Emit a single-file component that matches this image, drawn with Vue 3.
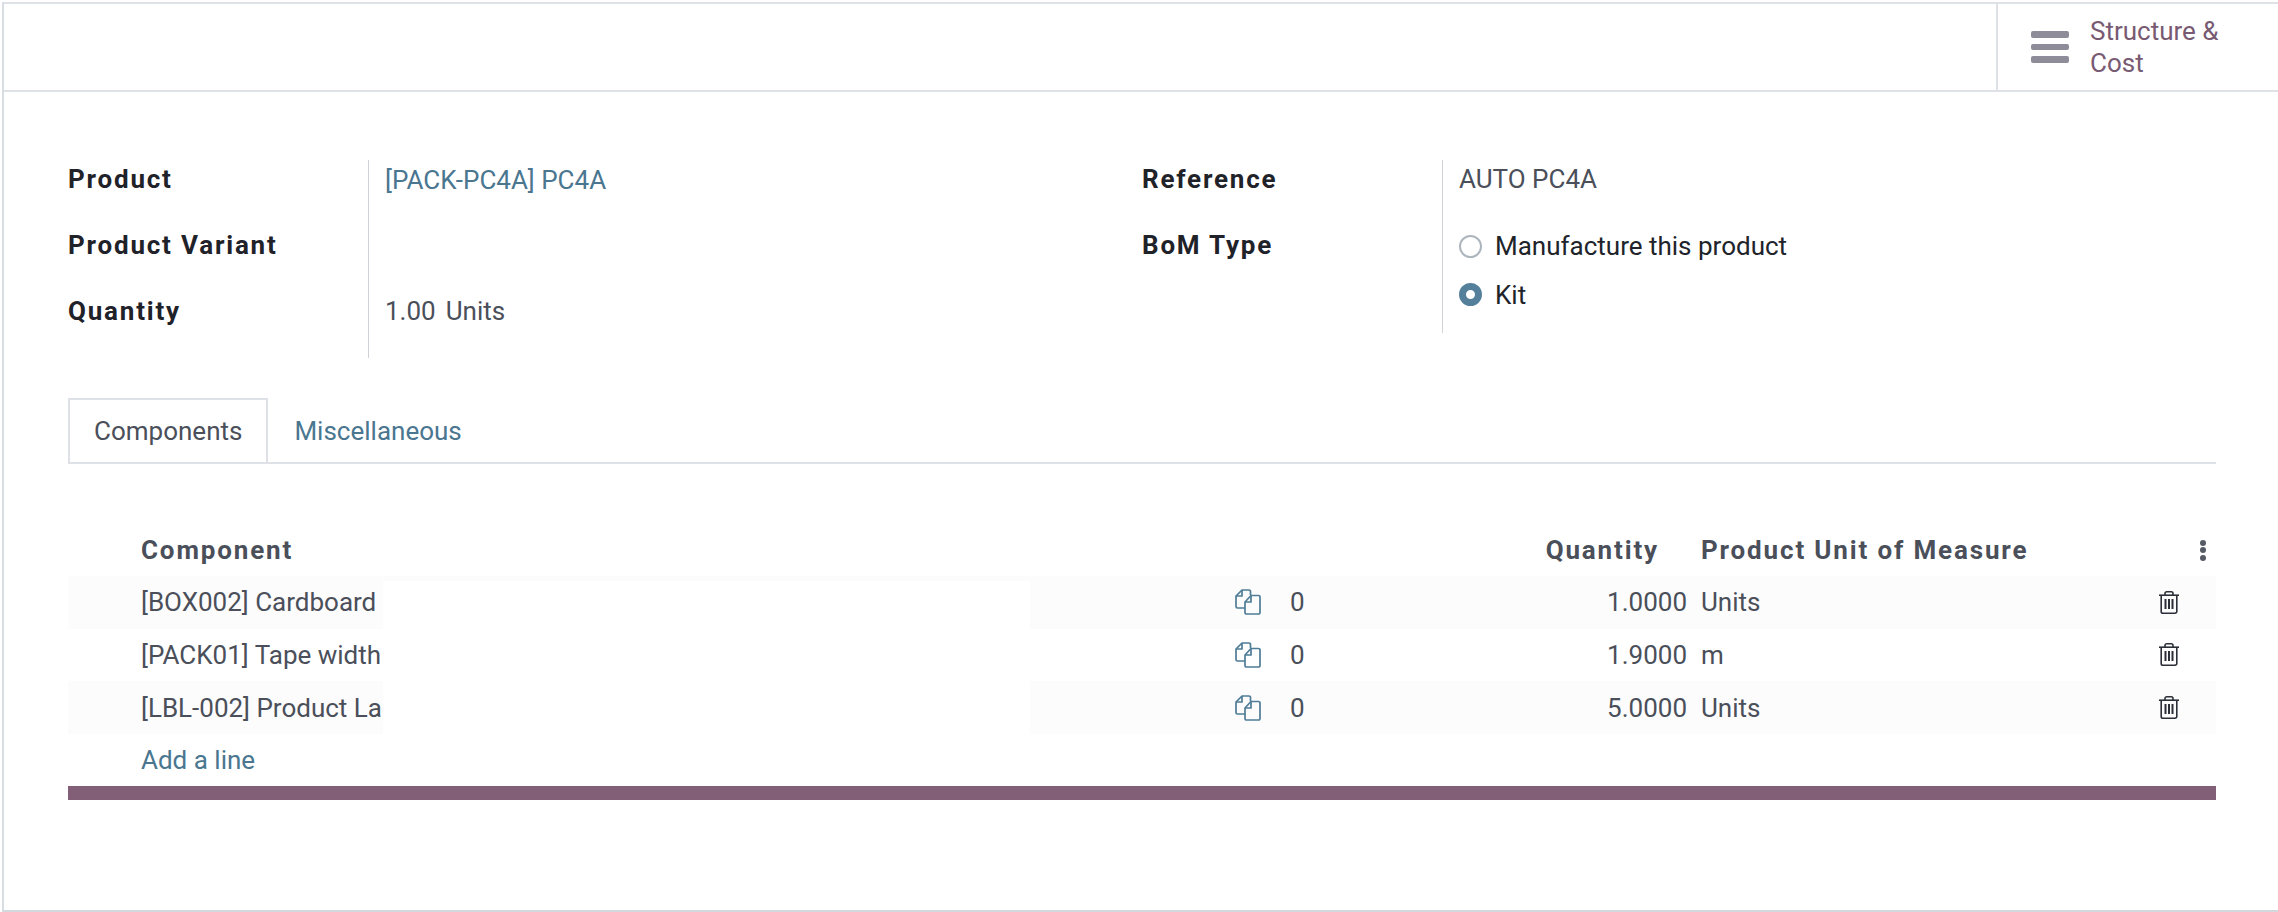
<script setup>
const rows = [
  { name: '[BOX002] Cardboard', qty: '1.0000', uom: 'Units' },
  { name: '[PACK01] Tape width', qty: '1.9000', uom: 'm' },
  { name: '[LBL-002] Product La', qty: '5.0000', uom: 'Units' },
]
</script>

<template>
  <div class="frame">
    <header class="topbar">
      <div class="stat">
        <div class="bars"><i></i><i></i><i></i></div>
        <div class="stat-text">Structure &amp;<br />Cost</div>
      </div>
    </header>

    <section class="sheet">
      <div class="groups">
        <div class="group">
          <div class="labels">
            <div class="label">Product</div>
            <div class="label">Product Variant</div>
            <div class="label">Quantity</div>
          </div>
          <div class="values v1">
            <div class="value link">[PACK-PC4A] PC4A</div>
            <div class="value"></div>
            <div class="value qty-val"><span>1.00</span><span>Units</span></div>
          </div>
        </div>
        <div class="group">
          <div class="labels">
            <div class="label">Reference</div>
            <div class="label">BoM Type</div>
          </div>
          <div class="values v2">
            <div class="value">AUTO PC4A</div>
            <div class="radio first"><span class="dot"></span>Manufacture this product</div>
            <div class="radio"><span class="dot on"></span>Kit</div>
          </div>
        </div>
      </div>

      <nav class="tabs">
        <div class="tab active">Components</div>
        <div class="tab">Miscellaneous</div>
      </nav>

      <div class="table">
        <div class="row head">
          <div class="c-name">Component</div>
          <div class="c-fc"></div>
          <div class="c-qty">Quantity</div>
          <div class="c-uom">Product Unit of Measure</div>
          <div class="c-act kebab"><i></i><i></i><i></i></div>
        </div>
        <div v-for="(r, i) in rows" :key="r.name" class="row body" :class="{ odd: i % 2 === 0, top: i === 0 }">
          <div class="c-name"><span class="clip">{{ r.name }}</span></div>
          <div class="c-fc">
            <svg class="copy" width="26" height="26" viewBox="0 0 26 26" fill="none" stroke="#4f7c96" stroke-width="1.7" stroke-linejoin="round">
              <path d="M15.5 6V2.5A1.5 1.5 0 0 0 14 1H7L1 7v10.5A1.5 1.5 0 0 0 2.5 19H10" />
              <path d="M7 1v6H1" />
              <path d="M16 6.5h7.5A1.5 1.5 0 0 1 25 8v15.5a1.5 1.5 0 0 1-1.5 1.5h-12a1.5 1.5 0 0 1-1.5-1.5V13z" />
              <path d="M16 6.5V13h-6" />
            </svg>
            <span class="zero">0</span>
          </div>
          <div class="c-qty">{{ r.qty }}</div>
          <div class="c-uom">{{ r.uom }}</div>
          <div class="c-act">
            <svg class="trash" width="20" height="23" viewBox="0 0 20 23" fill="none" stroke="#2b2f38" stroke-width="1.6" stroke-linejoin="round">
              <path d="M0 4.2h20" />
              <path d="M6 4V2.5A1.7 1.7 0 0 1 7.7.8h4.6A1.7 1.7 0 0 1 14 2.5V4" />
              <path d="M2.2 4.2v16.2a1.8 1.8 0 0 0 1.8 1.8h12a1.8 1.8 0 0 0 1.8-1.8V4.2" />
              <path d="M6.5 8v10M10 8v10M13.5 8v10" stroke-width="2" />
            </svg>
          </div>
        </div>
        <div class="row add"><div class="c-name">Add a line</div></div>
        <div class="rule"></div>
      </div>
    </section>
  </div>
</template>

<style>
html, body { margin: 0; background: #fff; }
</style>

<style scoped>
.frame {
  box-sizing: border-box;
  width: 2276px;
  height: 910px;
  margin: 2px 0 0 2px;
  border-top: 2px solid #dee2e6;
  border-left: 2px solid #d8dde2;
  border-bottom: 2px solid #d3d8dc;
  font-family: Roboto, "Liberation Sans", sans-serif;
  font-size: 26px;
  color: #4a4f5a;
  background: #fff;
}
.topbar {
  box-sizing: border-box;
  display: flex;
  justify-content: flex-end;
  height: 88px;
  border-bottom: 2px solid #dee2e6;
}
.stat {
  box-sizing: border-box;
  width: 282px;
  display: flex;
  align-items: center;
  gap: 21px;
  padding-left: 33px;
  border-left: 2px solid #dee2e6;
  color: #785a72;
  line-height: 32px;
}
.bars { display: flex; flex-direction: column; gap: 6px; }
.bars i { display: block; width: 38px; height: 6.7px; border-radius: 2px; background: #8f8c9a; }
.sheet { padding: 68px 62px 0 64px; }
.groups { display: flex; }
.group { display: flex; width: 1074px; }
.labels { width: 300px; flex: none; }
.label {
  height: 66px;
  line-height: 38px;
  font-weight: 700;
  letter-spacing: 1.8px;
  color: #1f2229;
}
.values {
  border-left: 1px solid #cfd2d6;
  padding-left: 16px;
  flex: 1;
}
.v1 { height: 198px; }
.v2 { height: 173px; }
.value { height: 66px; line-height: 38px; }
.link { color: #4a7690; line-height: 41px; }
.qty-val { display: flex; gap: 10px; }
.radio {
  display: flex;
  align-items: center;
  gap: 13px;
  height: 48.5px;
  color: #20232a;
}
.radio.first { margin-top: -4px; }
.dot {
  box-sizing: border-box;
  width: 23px;
  height: 23px;
  border-radius: 50%;
  border: 2px solid #adb5bd;
  background: #fff;
}
.dot.on { border: 7px solid #55809b; }
.tabs {
  display: flex;
  margin-top: 40px;
  height: 66px;
  box-sizing: border-box;
  border-bottom: 2px solid #dee2e6;
}
.tab {
  box-sizing: border-box;
  height: 64px;
  padding: 0 26px;
  line-height: 66px;
  color: #4a7690;
}
.tab.active {
  border: 2px solid #dee2e6;
  border-bottom: none;
  color: #4a4f5a;
  padding: 0 24px;
  line-height: 62px;
}
.table { margin-top: 60px; }
.row { display: flex; align-items: center; }
.head { height: 52px; font-weight: 700; letter-spacing: 1.85px; }
.body { height: 52.67px; }
.body.odd { background: #fcfcfc; }
.c-name { flex: none; width: 315px; box-sizing: border-box; padding-left: 73px; }
.clip { display: block; white-space: nowrap; overflow: hidden; }
.body .c-name { align-self: stretch; display: flex; align-items: center; }
.c-fc {
  box-sizing: border-box;
  width: 1017px;
  flex: none;
  align-self: stretch;
  display: flex;
  align-items: center;
  padding-left: 852px;
  gap: 29px;
}
.body .c-fc { background: linear-gradient(#fff, #fff) left bottom / 647px 100% no-repeat; }
.body.top .c-fc { background-size: 647px calc(100% - 5px); }
.copy, .trash { flex: none; }
.c-qty { flex: none; width: 287px; box-sizing: border-box; text-align: right; }
.head .c-qty { padding-right: 28px; }
.c-uom { flex: 1; padding-left: 14px; }
.c-act { flex: none; width: 80px; box-sizing: border-box; display: flex; justify-content: flex-end; padding-right: 37px; }
.kebab { flex-direction: column; align-items: flex-end; gap: 1.5px; padding-right: 10px; }
.kebab i { display: block; width: 6px; height: 6px; border-radius: 50%; background: #565b66; }
.add { height: 52px; color: #4a7690; }
.rule { height: 14px; background: #825e77; }
</style>
